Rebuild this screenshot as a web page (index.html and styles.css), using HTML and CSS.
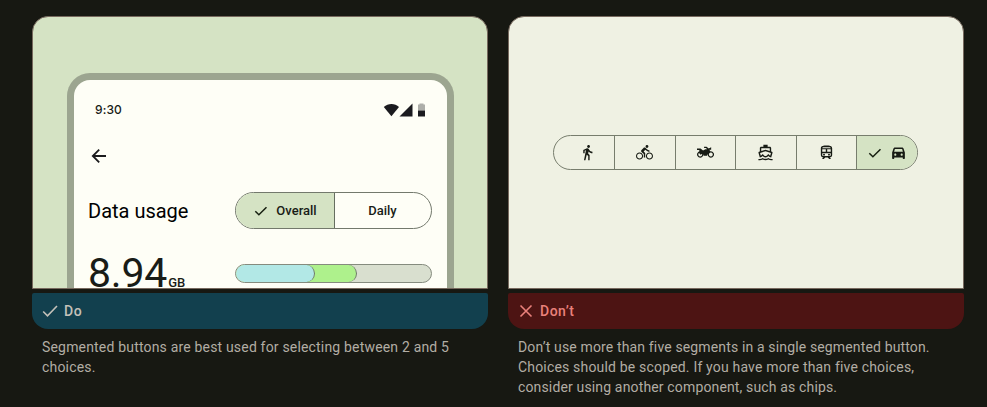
FILE: index.html
```html
<!DOCTYPE html>
<html lang="en">
<head>
<meta charset="utf-8">
<title>Segmented buttons</title>
<link rel="stylesheet" href="styles.css">
</head>
<body>
<main class="guides">
  <figure class="guide">
    <div class="art art-do">
      <div class="phone">
        <div class="status">
          <span class="time">9:30</span>
          <svg class="signals" width="43" height="14" viewBox="0 0 43 14"><path d="M.8 4C5-.1 12-.1 16 4L8.400 13.200Z"/><path d="M29.500 .5V13.500H16.500Z"/><path fill="#adaea9" d="M35 1.500H36.500V.5h4v1h1.500V7.500h-7Z"/><path d="M35 7.500H42v6h-7Z"/></svg>
        </div>
        <svg class="back" width="20" height="20" viewBox="0 0 20 20"><path d="M17 10H4.300M10.200 3.600 3.800 10l6.400 6.400"/></svg>
        <div class="usage">
          <span class="usage-title">Data usage</span>
          <div class="toggle">
            <span class="option chosen"><svg class="tick" width="14" height="12" viewBox="0 0 14 12"><path d="M1.300 6.200 4.900 9.800 12.500 2.200"/></svg><span class="overall">Overall</span></span>
            <span class="option">Daily</span>
          </div>
        </div>
        <div class="total">
          <div class="amount"><span class="number">8.94</span><span class="unit">GB</span></div>
          <div class="meter"><span class="fill green"></span><span class="fill blue"></span></div>
        </div>
      </div>
    </div>
    <div class="verdict do"><svg width="16" height="14" viewBox="0 0 16 14"><path d="m1.200 7.500 4.300 4.300L15 2"/></svg><span>Do</span></div>
    <figcaption><span class="line l1">Segmented buttons are best used for selecting between 2 and 5</span> <span class="line l2">choices.</span></figcaption>
  </figure>
  <figure class="guide">
    <div class="art art-dont">
      <div class="segments">
        <span class="segment walk"><svg width="17" height="17" viewBox="0 0 24 24"><path d="M13.500 5.500c1.100 0 2-.9 2-2s-.9-2-2-2-2 .9-2 2 .9 2 2 2zM9.800 8.900 7 23h2.100l1.800-8 2.100 2v6h2v-7.500l-2.100-2 .6-3C14.800 12 16.800 13 19 13v-2c-1.900 0-3.500-1-4.300-2.400l-1-1.600c-.4-.6-1-1-1.700-1-.3 0-.5.1-.8.1L6 8.300V13h2V9.600z"/></svg></span>
        <span class="segment"><svg width="17" height="17" viewBox="0 0 24 24"><path d="M15.500 5.500c1.100 0 2-.9 2-2s-.9-2-2-2-2 .9-2 2 .9 2 2 2zM5 12c-2.800 0-5 2.200-5 5s2.200 5 5 5 5-2.200 5-5-2.200-5-5-5zm0 8.500c-1.900 0-3.500-1.600-3.500-3.500s1.600-3.500 3.500-3.500 3.500 1.600 3.500 3.500-1.600 3.500-3.500 3.500zm5.800-10 2.400-2.400.8.8c1.300 1.300 3 2.100 5.100 2.100V9c-1.500 0-2.700-.6-3.600-1.500l-1.900-1.900c-.5-.4-1-.6-1.600-.6s-1.100.2-1.400.6L7.800 8.400c-.4.4-.6.9-.6 1.400 0 .6.2 1.100.6 1.400L11 14v5h2v-6.200zM19 12c-2.800 0-5 2.200-5 5s2.200 5 5 5 5-2.200 5-5-2.200-5-5-5zm0 8.500c-1.900 0-3.500-1.600-3.500-3.500s1.600-3.500 3.500-3.500 3.500 1.600 3.500 3.500-1.600 3.500-3.500 3.500z"/></svg></span>
        <span class="segment"><svg width="17" height="17" viewBox="0 0 24 24"><path fill="none" stroke="#171b14" stroke-width="1.800" d="M4.500 11.200a3.600 3.600 0 1 0 .1 0ZM19.500 11.200a3.600 3.600 0 1 0 .1 0Z"/><path d="M0 6.500h5l3.500 2.500L12 7.500h2.500l-2-2H10V3.800h3.500l3 2.500L20 4.500V8h-2.500l1.500 3-3 2-2 3.500H9.500l-1.500-3-3 1.500L2 11.500 4 10 2.500 8.500H0Z"/></svg></span>
        <span class="segment"><svg width="17" height="17" viewBox="0 0 24 24"><path fill-rule="evenodd" d="M20 21c-1.390 0-2.780-.47-4-1.320-2.440 1.710-5.560 1.710-8 0C6.780 20.530 5.390 21 4 21H2v2h2c1.380 0 2.740-.35 4-.99 2.520 1.290 5.480 1.290 8 0 1.260.65 2.620.99 4 .99h2v-2zM3.950 19H4c1.600 0 3.020-.88 4-2 .98 1.120 2.400 2 4 2s3.020-.88 4-2c.98 1.120 2.400 2 4 2h.05l1.890-6.680c.08-.26.06-.54-.06-.78s-.34-.42-.6-.5L20 10.620V6c0-1.100-.9-2-2-2h-3V1H9v3H6c-1.100 0-2 .9-2 2v4.620l-1.290.42c-.26.08-.48.26-.6.5s-.15.520-.06.780ZM6 6h12v3.970L12 8 6 9.970ZM4.300 12.700 12 10.100l7.700 2.600-1.100 3.800c-.5-.2-.9-.6-2.600-2.500-2 2.500-3 3-4 3s-2-.5-4-3c-1.700 1.900-2.100 2.300-2.600 2.500Z"/></svg></span>
        <span class="segment"><svg width="17" height="17" viewBox="0 0 24 24"><path fill-rule="evenodd" d="M12 2C8 2 4 2.500 4 6v9.500C4 17.430 5.570 19 7.500 19L6 20.500v.5h2.200l2-2h3.600l2 2H18v-.5L16.500 19c1.930 0 3.500-1.570 3.500-3.500V6c0-3.500-4-4-8-4ZM7 4.700h10c.6.3.9.7 1 1.300H6c.1-.6.400-1 1-1.300ZM6 7.500h5V11H6Zm7 0h5V11h-5ZM6 13h12v2.500c0 .9-.7 1.500-1.500 1.500h-9c-.8 0-1.500-.6-1.500-1.500Z"/><circle cx="8.500" cy="15" r="1.400"/><circle cx="15.500" cy="15" r="1.400"/></svg></span>
        <span class="segment chosen car"><svg class="tick" width="14" height="12" viewBox="0 0 14 12"><path d="M1.300 6.200 4.900 9.800 12.500 2.200"/></svg><svg width="17" height="17" viewBox="0 0 24 24"><path d="M18.920 6.010C18.720 5.420 18.160 5 17.500 5h-11c-.66 0-1.210.42-1.420 1.010L3 12v8c0 .55.45 1 1 1h1c.55 0 1-.45 1-1v-1h12v1c0 .55.45 1 1 1h1c.55 0 1-.45 1-1v-8zM7.500 16.500c-.83 0-1.500-.67-1.500-1.500s.67-1.500 1.500-1.500S9 14.170 9 15s-.67 1.500-1.500 1.500zm9 0c-.83 0-1.500-.67-1.500-1.500s.67-1.500 1.500-1.500 1.500.67 1.500 1.500-.67 1.500-1.500 1.500zM5.800 11l1.100-4h10.200l1.100 4z"/></svg></span>
      </div>
    </div>
    <div class="verdict dont"><svg width="16" height="14" viewBox="0 0 16 14"><path d="m2.500 1.500 11 11m0-11-11 11"/></svg><span>Don’t</span></div>
    <figcaption><span class="line r1">Don’t use more than five segments in a single segmented button.</span> <span class="line r2">Choices should be scoped. If you have more than five choices,</span> <span class="line r3">consider using another component, such as chips.</span></figcaption>
  </figure>
</main>
</body>
</html>
```

FILE: styles.css
```css
* { box-sizing: border-box; }
body { margin: 0; background: #171812; font-family: Roboto, sans-serif; overflow: hidden; }
svg { display: block; flex: none; }
.guides { display: flex; gap: 20px; padding: 16px 23px 0 32px; height: 407px; }
.guide { width: 456px; margin: 0; }
.art { height: 273px; border: 1px solid #77695e; border-radius: 16px 16px 0 0; overflow: hidden; }
.art-do { background: #d5e3c4; padding: 56px 34px 0 33.500px; }
.art-dont { background: #eff1e3; padding: 118px 0 0 44px; }
.phone { width: 387px; height: 217px; border: 7px solid #9ca590; border-bottom: 0; border-radius: 23px 23px 0 0; background: #fefef6; padding: 0 14.500px 0 14.500px; color: #191c17; }
.status { display: flex; align-items: center; justify-content: space-between; height: 16px; margin-top: 22px; padding: 0 6.500px 0 7px; }
.time { font: 500 12px/16px Inter, sans-serif; letter-spacing: .1px; }
.signals { fill: #1b1b1f; }
.back { margin: 28px 0 0 .5px; fill: none; stroke: #1b1b1d; stroke-width: 1.8; }
.usage { display: flex; justify-content: space-between; align-items: center; margin-top: 26px; height: 37px; }
.usage-title { font-size: 20px; color: #000; }
.toggle { display: flex; width: 197px; height: 37px; border: 1px solid #73796c; border-radius: 19px; overflow: hidden; }
.option { flex: 1; display: flex; align-items: center; justify-content: center; font-size: 13px; font-weight: 500; }
.option + .option { border-left: 1px solid #666e60; }
.option.chosen { padding-left: 2px; }
.chosen { background: #d5e3c4; }
.tick { fill: none; stroke: #172011; stroke-width: 1.5; margin-right: 8px; }
.toggle, .meter { margin-right: .5px; }
.total { display: flex; justify-content: space-between; margin-top: 24px; }
.amount { display: flex; align-items: baseline; line-height: 40px; height: 40px; }
.number { font-size: 41px; letter-spacing: -.2px; }
.unit { font-size: 13px; font-weight: 500; margin-left: 1px; }
.meter { display: grid; width: 197px; height: 19px; margin-top: 11px; border: 1px solid #858b7e; border-radius: 10px; background: #d9dfcf; overflow: hidden; }
.fill { grid-area: 1 / 1; border-right: 1px solid #6f7869; border-radius: 9px; }
.green { width: 121px; background: #aef18c; }
.blue { width: 79px; background: #b2e8e6; }
.verdict { display: flex; align-items: center; gap: 6px; height: 36px; margin-top: 4px; padding-left: 10px; border-radius: 2px 2px 16px 16px; font-size: 14px; font-weight: 500; letter-spacing: .5px; }
.verdict svg { fill: none; stroke: currentColor; stroke-width: 1.6; }
.do { background: #12404e; color: #c4c1b9; }
.dont { background: #4d1413; color: #ea817b; }
figcaption { padding: 8px 0 0 10px; font-size: 14px; line-height: 20px; color: #b2ada4; }
.line { display: block; white-space: nowrap; letter-spacing: .18px; }
.r1 { letter-spacing: .145px; }
.r3 { letter-spacing: .15px; }
.segments { display: grid; grid-template-columns: repeat(6, 1fr); width: 365px; height: 35px; border: 1px solid #777d6d; border-radius: 18px; overflow: hidden; }
.segment { display: flex; align-items: center; justify-content: center; fill: #171b14; margin-left: -.5px; padding-right: 1px; }
.segment + .segment { border-left: 1px solid #777d6d; }
.walk { padding-left: 8px; }
.car { padding-left: 1px; padding-right: 0; }
```
